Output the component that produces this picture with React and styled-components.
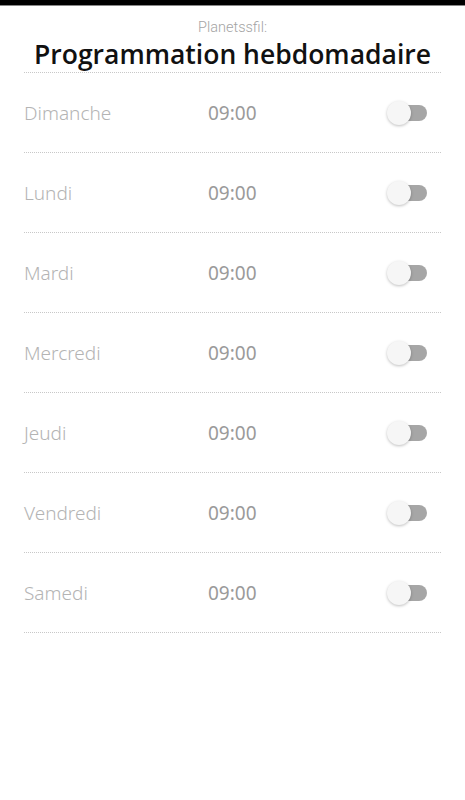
import React, { useState } from 'react';
import styled, { createGlobalStyle } from 'styled-components';

const GlobalStyle = createGlobalStyle`
    body {
        margin: 0;
        background: #fff;
        font-family: "Open Sans", "Noto Sans", sans-serif;
    }
`

const Page = styled.div`
    width: 465px;
    min-height: 800px;
    background: #fff;
`

const TopBar = styled.div`
    height: 5px;
    background: #000;
    border-bottom: 1px solid #888;
`

const Header = styled.div`
    display: flex;
    flex-direction: column;
    align-items: center;
    margin: 0 24px;
    padding-top: 13px;
    border-bottom: 1px dotted #c8c8c8;
`

const Subtitle = styled.div`
    font-family: Roboto, sans-serif;
    font-weight: 300;
    font-size: 14.5px;
    line-height: 17px;
    color: #a4a4a4;
`

const Title = styled.h1`
    margin: 0;
    font-family: "Open Sans", sans-serif;
    font-weight: 600;
    font-size: 26.5px;
    line-height: 36px;
    color: #111;
`

const List = styled.div`
    margin: 0 24px;
`

const Row = styled.div`
    display: flex;
    align-items: center;
    height: 79px;
    border-bottom: 1px dotted #c8c8c8;
`

const Day = styled.span`
    width: 184px;
    font-family: "Noto Sans", sans-serif;
    font-weight: 300;
    font-size: 19px;
    color: #b4b4b4;
`

const Time = styled.span`
    flex: 1;
    font-family: "Noto Sans", sans-serif;
    font-size: 19px;
    font-weight: 400;
    color: #9a9a9a;
`

const Switch = styled.button`
    position: relative;
    width: 38px;
    height: 16px;
    margin-right: 14px;
    padding: 0;
    border: none;
    border-radius: 8px;
    background: ${props => props.on ? "#7fb3e0" : "#a6a6a6"};
    cursor: pointer;
`

const Knob = styled.span`
    position: absolute;
    top: -4px;
    left: ${props => props.on ? "16px" : "-2px"};
    width: 24px;
    height: 24px;
    border-radius: 50%;
    background: #f6f6f6;
    box-shadow: 0 1px 3px rgba(0, 0, 0, 0.25);
`

const days = ["Dimanche", "Lundi", "Mardi", "Mercredi", "Jeudi", "Vendredi", "Samedi"]

const App = () => {
    const [enabled, setEnabled] = useState(days.map(() => false))

    const toggle = (index) => {
        setEnabled(enabled.map((v, i) => i === index ? !v : v))
    }

    return (
        <Page>
            <GlobalStyle />
            <TopBar />
            <Header>
                <Subtitle>Planetssfil:</Subtitle>
                <Title>Programmation hebdomadaire</Title>
            </Header>
            <List>
                {days.map((day, index) => (
                    <Row key={day}>
                        <Day>{day}</Day>
                        <Time>09:00</Time>
                        <Switch on={enabled[index] ? 1 : 0} onClick={() => toggle(index)}>
                            <Knob on={enabled[index] ? 1 : 0} />
                        </Switch>
                    </Row>
                ))}
            </List>
        </Page>
    )
}

export default App
